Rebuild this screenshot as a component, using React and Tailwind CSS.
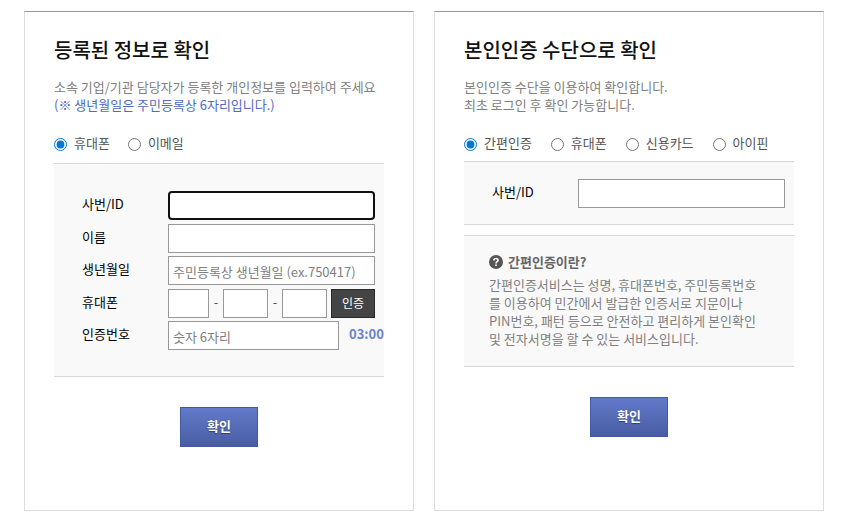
import clsx from 'clsx'

const inputBase = 'block h-[29px] min-w-0 border border-[#999] bg-white px-1 pt-0.5 text-[13px] text-[#333] outline-none placeholder:text-[#808080]'

function Card({ title, children }) {
    return (
        <section className="min-h-[500px] min-w-0 flex-1 border border-[#ddd] border-t-[#999] bg-white px-[29px] pt-[23px] pb-8">
            <h2 className="text-[20px] leading-[30px] font-medium text-[#111]">{title}</h2>
            {children}
        </section>
    )
}

function RadioGroup({ name, label, options, className }) {
    return (
        <div role="radiogroup" aria-label={label} className={clsx('mt-5 flex flex-wrap', className)}>
            {options.map((option, i) => (
                <label key={option} className="flex items-center gap-[7px] leading-[18px] text-[#555]">
                    <input type="radio" name={name} value={option} defaultChecked={i === 0} className="mt-0.5 size-[13px] accent-[#0078d7]" />
                    {option}
                </label>
            ))}
        </div>
    )
}

function Row({ id, label, children }) {
    return (
        <div className="flex items-center">
            <label htmlFor={id} className="w-[86px] shrink-0 pb-[3px] leading-[18px] text-black">{label}</label>
            <div className="flex min-w-0 flex-1 items-center">{children}</div>
        </div>
    )
}

function Dash() {
    return <span className="w-[14px] pb-[3px] text-center leading-[18px] text-[#555]">-</span>
}

function ConfirmButton() {
    return (
        <button type="submit" className="mx-auto mt-[30px] block h-10 w-[78px] border border-[#4159a3] bg-linear-to-b from-[#627aca] to-[#485da3] pb-0.5 text-[13px] font-bold text-white text-shadow-[0_1px_1px_rgb(0_0_0/0.4)]">
            확인
        </button>
    )
}

function HelpIcon() {
    return (
        <svg viewBox="0 0 14 14" className="size-[14px] shrink-0" aria-hidden="true">
            <circle cx="7" cy="7" r="7" fill="#555" />
            <path d="M4.9 5.5C4.9 4.2 5.8 3.5 7 3.5s2.1.7 2.1 1.8C9.1 6.6 7 6.8 7 8.4" fill="none" stroke="#fff" strokeWidth="1.6" />
            <rect x="6.2" y="9.3" width="1.6" height="1.6" fill="#fff" />
        </svg>
    )
}

function RegisteredInfoCard() {
    return (
        <Card title="등록된 정보로 확인">
            <p className="mt-[13px] leading-[18px] whitespace-nowrap text-[#808080]">
                소속 기업/기관 담당자가 등록한 개인정보를 입력하여 주세요
                <br />
                <span className="text-[#4f6bc0]">(※ 생년월일은 주민등록상 6자리입니다.)</span>
            </p>
            <form onSubmit={(e) => e.preventDefault()}>
                <RadioGroup name="contact" label="확인 방법" options={['휴대폰', '이메일']} className="gap-x-[18px]" />
                <div className="mt-[11px] border-y border-[#d8d8d8] bg-[#f9f9f9] pt-[27px] pb-[26px] pl-7">
                    <div className="flex min-h-[159px] flex-col justify-between">
                        <Row id="reg-id" label="사번/ID">
                            <input id="reg-id" type="text" className="mr-[9px] block h-[29px] min-w-0 flex-1 rounded border-2 border-[#101010] bg-white px-1 text-[13px] outline-none" />
                        </Row>
                        <Row id="reg-name" label="이름">
                            <input id="reg-name" type="text" className={clsx(inputBase, 'mr-[9px] flex-1')} />
                        </Row>
                        <Row id="reg-birth" label="생년월일">
                            <input id="reg-birth" type="text" placeholder="주민등록상 생년월일 (ex.750417)" className={clsx(inputBase, 'mr-[9px] flex-1')} />
                        </Row>
                        <Row id="reg-phone" label="휴대폰">
                            <input id="reg-phone" type="text" className={clsx(inputBase, 'w-[41px]')} />
                            <Dash />
                            <input type="text" aria-label="휴대폰 가운데 번호" className={clsx(inputBase, 'flex-1')} />
                            <Dash />
                            <input type="text" aria-label="휴대폰 마지막 번호" className={clsx(inputBase, 'flex-1')} />
                            <button type="button" className="mr-[9px] ml-1 h-[29px] w-11 border border-[#282828] bg-[#444] text-[12px] text-white">인증</button>
                        </Row>
                        <Row id="reg-code" label="인증번호">
                            <input id="reg-code" type="text" placeholder="숫자 6자리" className={clsx(inputBase, 'flex-1')} />
                            <span className="w-[45px] pb-[3px] pl-[10px] leading-[18px] font-bold text-[#6b82cc]">03:00</span>
                        </Row>
                    </div>
                </div>
                <ConfirmButton />
            </form>
        </Card>
    )
}

function IdentityCard() {
    return (
        <Card title="본인인증 수단으로 확인">
            <p className="mt-[13px] leading-[18px] whitespace-nowrap text-[#808080]">
                본인인증 수단을 이용하여 확인합니다.
                <br />
                최초 로그인 후 확인 가능합니다.
            </p>
            <form onSubmit={(e) => e.preventDefault()}>
                <RadioGroup name="method" label="본인인증 수단" options={['간편인증', '휴대폰', '신용카드', '아이핀']} className="gap-x-[19px]" />
                <div className="mt-[9px] border-y border-[#d8d8d8] bg-[#f9f9f9] pt-[17px] pr-[9px] pb-4 pl-7">
                    <Row id="auth-id" label="사번/ID">
                        <input id="auth-id" type="text" className={clsx(inputBase, 'flex-1')} />
                    </Row>
                </div>
                <div className="mt-2.5 border-y border-[#d8d8d8] bg-[#f9f9f9] px-[25px] pt-[17px] pb-[18px] text-[#808080]">
                    <h3 className="flex items-center gap-[5px] leading-[18px] font-bold text-[#666]">
                        <HelpIcon />
                        간편인증이란?
                    </h3>
                    <p className="mt-[5px] leading-[18px] whitespace-nowrap">
                        간편인증서비스는 성명, 휴대폰번호, 주민등록번호
                        <br />
                        를 이용하여 민간에서 발급한 인증서로 지문이나
                        <br />
                        PIN번호, 패턴 등으로 안전하고 편리하게 본인확인
                        <br />
                        및 전자서명을 할 수 있는 서비스입니다.
                    </p>
                </div>
                <ConfirmButton />
            </form>
        </Card>
    )
}

export default function App() {
    return (
        <main className="flex gap-5 bg-white pt-[11px] pr-[25px] pb-[19px] pl-6 font-['Noto_Sans_CJK_KR',sans-serif] text-[13px]">
            <RegisteredInfoCard />
            <IdentityCard />
        </main>
    )
}
